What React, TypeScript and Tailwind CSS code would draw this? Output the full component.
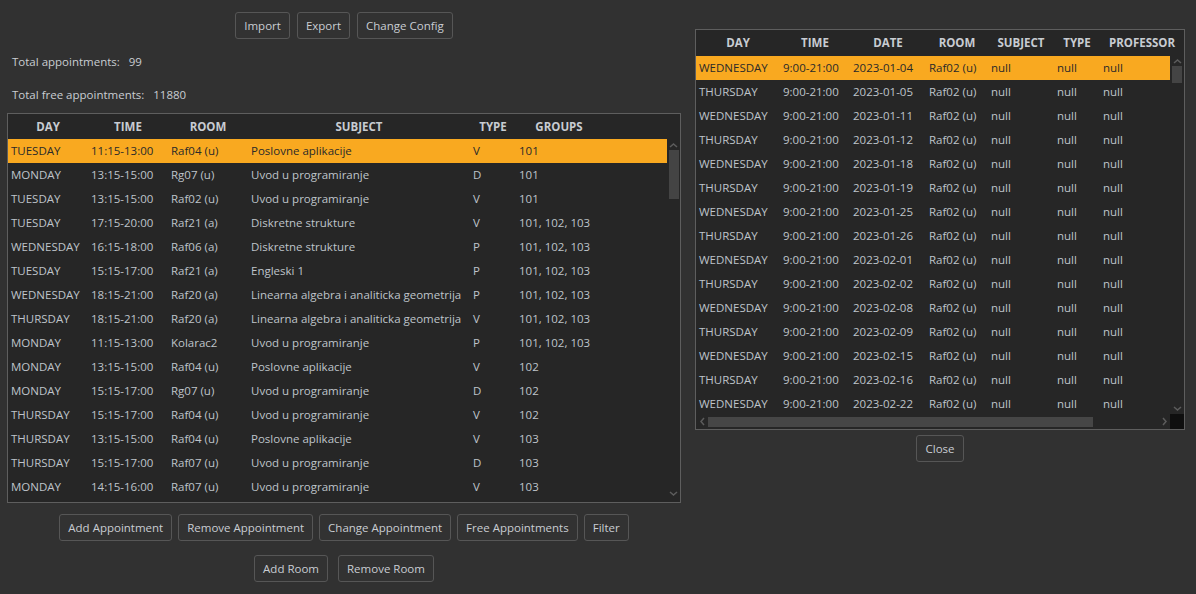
import React from 'react';

type Col = { title: string; w: string };

const leftCols: Col[] = [
    { title: 'DAY', w: 'w-[80px]' },
    { title: 'TIME', w: 'w-[80px]' },
    { title: 'ROOM', w: 'w-[80px]' },
    { title: 'SUBJECT', w: 'w-[222px]' },
    { title: 'TYPE', w: 'w-[46px]' },
    { title: 'GROUPS', w: 'w-[86px]' },
];

const rightCols: Col[] = [
    { title: 'DAY', w: 'w-[84px]' },
    { title: 'TIME', w: 'w-[70px]' },
    { title: 'DATE', w: 'w-[76px]' },
    { title: 'ROOM', w: 'w-[62px]' },
    { title: 'SUBJECT', w: 'w-[66px]' },
    { title: 'TYPE', w: 'w-[46px]' },
    { title: 'PROFESSOR', w: 'w-[84px]' },
];

const appointments = [
    ['TUESDAY', '11:15-13:00', 'Raf04 (u)', 'Poslovne aplikacije', 'V', '101'],
    ['MONDAY', '13:15-15:00', 'Rg07 (u)', 'Uvod u programiranje', 'D', '101'],
    ['TUESDAY', '13:15-15:00', 'Raf02 (u)', 'Uvod u programiranje', 'V', '101'],
    ['TUESDAY', '17:15-20:00', 'Raf21 (a)', 'Diskretne strukture', 'V', '101, 102, 103'],
    ['WEDNESDAY', '16:15-18:00', 'Raf06 (a)', 'Diskretne strukture', 'P', '101, 102, 103'],
    ['TUESDAY', '15:15-17:00', 'Raf21 (a)', 'Engleski 1', 'P', '101, 102, 103'],
    ['WEDNESDAY', '18:15-21:00', 'Raf20 (a)', 'Linearna algebra i analiticka geometrija', 'P', '101, 102, 103'],
    ['THURSDAY', '18:15-21:00', 'Raf20 (a)', 'Linearna algebra i analiticka geometrija', 'V', '101, 102, 103'],
    ['MONDAY', '11:15-13:00', 'Kolarac2', 'Uvod u programiranje', 'P', '101, 102, 103'],
    ['MONDAY', '13:15-15:00', 'Raf04 (u)', 'Poslovne aplikacije', 'V', '102'],
    ['MONDAY', '15:15-17:00', 'Rg07 (u)', 'Uvod u programiranje', 'D', '102'],
    ['THURSDAY', '15:15-17:00', 'Raf04 (u)', 'Uvod u programiranje', 'V', '102'],
    ['THURSDAY', '13:15-15:00', 'Raf04 (u)', 'Poslovne aplikacije', 'V', '103'],
    ['THURSDAY', '15:15-17:00', 'Raf07 (u)', 'Uvod u programiranje', 'D', '103'],
    ['MONDAY', '14:15-16:00', 'Raf07 (u)', 'Uvod u programiranje', 'V', '103'],
];

const freeDates = [
    '2023-01-04', '2023-01-05', '2023-01-11', '2023-01-12', '2023-01-18',
    '2023-01-19', '2023-01-25', '2023-01-26', '2023-02-01', '2023-02-02',
    '2023-02-08', '2023-02-09', '2023-02-15', '2023-02-16', '2023-02-22',
];

const freeSlots = freeDates.map((d, i) => [
    i % 2 === 0 ? 'WEDNESDAY' : 'THURSDAY', '9:00-21:00', d, 'Raf02 (u)', 'null', 'null', 'null',
]);

function Button({ label }: { label: string }) {
    return (
        <button className="h-[27px] px-[8px] bg-[#323232] border border-[#565656] rounded-[3px] text-[#c9cdd2] text-[11.5px] leading-none">
            {label}
        </button>
    );
}

function Chevron({ dir }: { dir: 'up' | 'down' | 'left' | 'right' }) {
    const paths = {
        up: 'M1 5 L4.5 2 L8 5',
        down: 'M1 2 L4.5 5 L8 2',
        left: 'M5 1 L2 4.5 L5 8',
        right: 'M2 1 L5 4.5 L2 8',
    };
    const box = dir === 'up' || dir === 'down' ? 'w-[9px] h-[7px]' : 'w-[7px] h-[9px]';
    const vb = dir === 'up' || dir === 'down' ? '0 0 9 7' : '0 0 7 9';
    return (
        <svg className={box} viewBox={vb} fill="none">
            <path d={paths[dir]} stroke="#5c5c5c" strokeWidth="1.5" />
        </svg>
    );
}

function HeaderRow({ cols, h }: { cols: Col[]; h: string }) {
    return (
        <div className={`flex ${h} shrink-0 bg-[#262626]`}>
            {cols.map(c => (
                <div key={c.title} className={`${c.w} shrink-0 flex items-center justify-center font-bold text-[#c8ccd2] whitespace-nowrap`}>
                    {c.title}
                </div>
            ))}
        </div>
    );
}

function BodyRows({ cols, rows }: { cols: Col[]; rows: string[][] }) {
    return (
        <>
            {rows.map((r, i) => (
                <div
                    key={i}
                    className={i === 0
                        ? 'flex h-[24px] shrink-0 bg-[#f9a920] text-[#2a2a2a]'
                        : 'flex h-[24px] shrink-0 text-[#bfc4ca]'}>
                    {cols.map((c, j) => (
                        <div key={j} className={`${c.w} shrink-0 flex items-center pl-[3px] whitespace-nowrap overflow-hidden`}>
                            {r[j]}
                        </div>
                    ))}
                </div>
            ))}
        </>
    );
}

function App() {
    return (
        <div className="w-[1196px] h-[594px] bg-[#313131] flex font-['Open_Sans',sans-serif] text-[11.5px] overflow-hidden">
            {/* Left panel */}
            <div className="w-[674px] ml-[7px] flex flex-col">
                <div className="flex justify-center gap-[7px] mt-[12px]">
                    <Button label="Import" />
                    <Button label="Export" />
                    <Button label="Change Config" />
                </div>

                <p className="mt-[15px] ml-[5px] h-[16px] leading-[16px] text-[#c9cdd2]">Total appointments:&nbsp;&nbsp;&nbsp;99</p>
                <p className="mt-[17px] ml-[5px] h-[16px] leading-[16px] text-[#c9cdd2]">Total free appointments:&nbsp;&nbsp;&nbsp;11880</p>

                {/* Appointments table */}
                <div className="mt-[10px] h-[390px] border border-[#5e5e5e] bg-[#262626] flex flex-col overflow-hidden">
                    <HeaderRow cols={leftCols} h="h-[25px]" />
                    <div className="flex flex-1 min-h-0">
                        <div className="w-[659px] flex flex-col overflow-hidden">
                            <BodyRows cols={leftCols} rows={appointments} />
                        </div>
                        <div className="w-[13px] flex flex-col items-center">
                            <div className="h-[10px] flex items-end"><Chevron dir="up" /></div>
                            <div className="w-[10px] h-[49px] mt-[1px] bg-[#444444]" />
                            <div className="flex-1" />
                            <div className="h-[10px] mb-[2px]"><Chevron dir="down" /></div>
                        </div>
                    </div>
                </div>

                <div className="flex justify-center gap-[6px] mt-[11px]">
                    <Button label="Add Appointment" />
                    <Button label="Remove Appointment" />
                    <Button label="Change Appointment" />
                    <Button label="Free Appointments" />
                    <Button label="Filter" />
                </div>
                <div className="flex justify-center gap-[10px] mt-[14px]">
                    <Button label="Add Room" />
                    <Button label="Remove Room" />
                </div>
            </div>

            {/* Right panel: free appointments */}
            <div className="w-[490px] ml-[14px] flex flex-col">
                <div className="mt-[29px] h-[401px] border border-[#5e5e5e] bg-[#262626] flex flex-col overflow-hidden">
                    <div className="overflow-hidden">
                        <HeaderRow cols={rightCols} h="h-[26px]" />
                    </div>
                    <div className="flex flex-1 min-h-0">
                        <div className="w-[474px] flex flex-col overflow-hidden">
                            <BodyRows cols={rightCols} rows={freeSlots} />
                        </div>
                        <div className="w-[14px] flex flex-col items-center">
                            <div className="h-[9px] flex items-end"><Chevron dir="up" /></div>
                            <div className="w-[10px] h-[17px] mt-[1px] bg-[#444444]" />
                            <div className="flex-1" />
                            <div className="h-[9px]"><Chevron dir="down" /></div>
                        </div>
                    </div>
                    <div className="flex h-[15px] shrink-0 items-center">
                        <div className="w-[12px] flex justify-center"><Chevron dir="left" /></div>
                        <div className="w-[385px] h-[10px] bg-[#464646]" />
                        <div className="flex-1" />
                        <div className="w-[12px] flex justify-center"><Chevron dir="right" /></div>
                        <div className="w-[14px] h-[15px] bg-[#0f0f0f]" />
                    </div>
                </div>
                <div className="flex justify-center mt-[5px]">
                    <Button label="Close" />
                </div>
            </div>
        </div>
    );
}

export default App;
